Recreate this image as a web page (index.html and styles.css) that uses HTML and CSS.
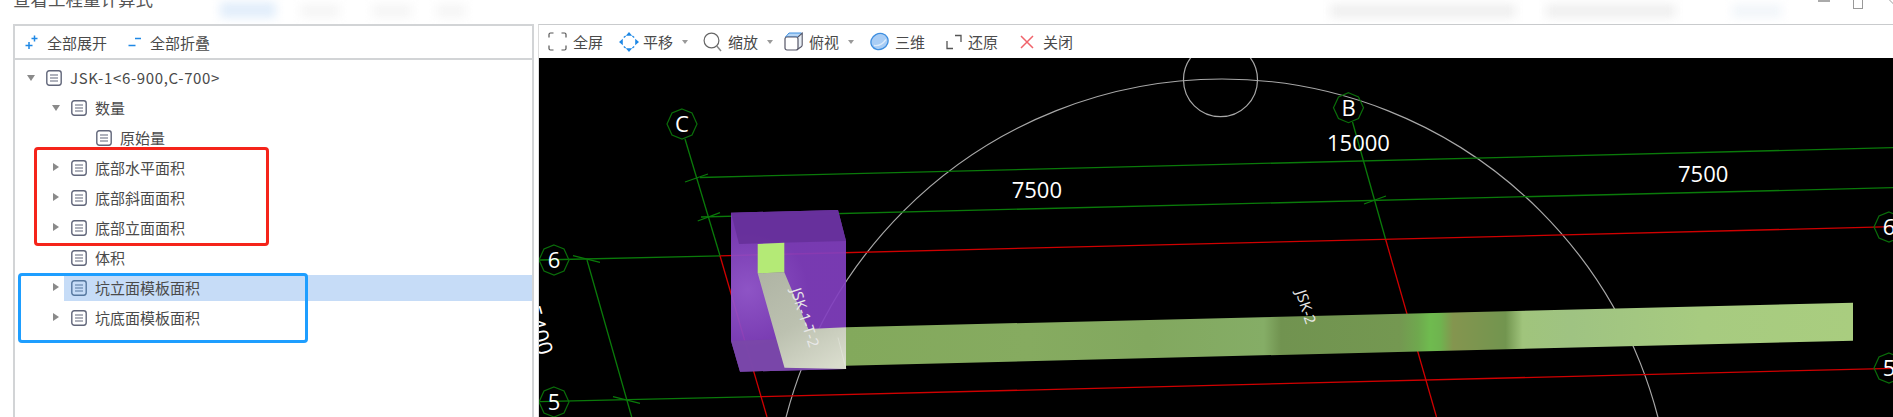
FILE: index.html
```html
<!DOCTYPE html>
<html lang="zh-CN">
<head>
  <meta charset="UTF-8">
  <title>查看工程量计算式</title>
  <link rel="stylesheet" href="styles.css">
</head>
<body>

  <svg class="defs" width="0" height="0">
    <symbol id="doc" viewBox="0 0 16 16">
      <rect x="0.8" y="0.8" width="14.4" height="14.4" rx="2.4" fill="none" stroke="currentColor" stroke-width="1.4"/>
      <path d="M4 5h8M4 8h8M4 11h8" stroke="currentColor" stroke-width="1.2"/>
    </symbol>
  </svg>

  <!-- title bar -->
  <div class="title-bar">
    <div class="title">查看工程量计算式</div>
    <span class="smudge smudge-blue"></span>
    <span class="smudge smudge-a"></span>
    <span class="smudge smudge-b"></span>
    <span class="smudge smudge-c"></span>
    <span class="smudge smudge-d"></span>
    <span class="smudge smudge-e"></span>
    <span class="smudge smudge-f"></span>
    <div class="win-btns">
      <span class="win-min"></span>
      <span class="win-max"></span>
      <span class="win-close"></span>
    </div>
  </div>

  <div class="main">
    <!-- left: tree -->
    <div class="tree-panel">
      <div class="tree-tools">
        <div class="tool">
          <svg class="tool-icon" width="13" height="14" viewBox="0 0 13 14"><path d="M4 7v7M0.500 10.500h7M9.500 0.500v6M6.500 3.500h6" stroke="#1e88e5" stroke-width="1.500" fill="none"/></svg>
          全部展开
        </div>
        <div class="tool">
          <svg class="tool-icon" width="13" height="14" viewBox="0 0 13 14"><path d="M0.500 10.500h7M7 3.500h6" stroke="#1e88e5" stroke-width="1.500" fill="none"/></svg>
          全部折叠
        </div>
      </div>

      <div class="tree">
        <div class="row level-1 latin"><i class="tog open"></i><div class="row-body"><svg class="doc"><use href="#doc"/></svg>JSK-1&lt;6-900,C-700&gt;</div></div>
        <div class="row level-2"><i class="tog open"></i><div class="row-body"><svg class="doc"><use href="#doc"/></svg>数量</div></div>
        <div class="row level-3"><i class="tog"></i><div class="row-body"><svg class="doc"><use href="#doc"/></svg>原始量</div></div>
        <div class="row level-2"><i class="tog shut"></i><div class="row-body"><svg class="doc"><use href="#doc"/></svg>底部水平面积</div></div>
        <div class="row level-2"><i class="tog shut"></i><div class="row-body"><svg class="doc"><use href="#doc"/></svg>底部斜面面积</div></div>
        <div class="row level-2"><i class="tog shut"></i><div class="row-body"><svg class="doc"><use href="#doc"/></svg>底部立面面积</div></div>
        <div class="row level-2"><i class="tog"></i><div class="row-body"><svg class="doc"><use href="#doc"/></svg>体积</div></div>
        <div class="row level-2 selected"><i class="tog shut"></i><div class="row-body"><svg class="doc"><use href="#doc"/></svg>坑立面模板面积</div></div>
        <div class="row level-2"><i class="tog shut"></i><div class="row-body"><svg class="doc"><use href="#doc"/></svg>坑底面模板面积</div></div>
      </div>

      <!-- annotation boxes drawn over the tree -->
      <div class="mark mark-red"></div>
      <div class="mark mark-blue"></div>
    </div>

    <!-- right: 3d view -->
    <div class="view-panel">
      <div class="view-tools">
        <div class="vt vt-full">
          <svg width="19" height="19" viewBox="0 0 19 19"><path d="M5.500 1H2.500Q1 1 1 2.500V5.500M13.500 1H16.500Q18 1 18 2.500V5.500M1 13.500V16.500Q1 18 2.500 18H5.500M18 13.500V16.500Q18 18 16.500 18H13.500" fill="none" stroke="#555" stroke-width="1.200"/></svg>
          全屏
        </div>
        <div class="vt vt-pan">
          <svg width="20" height="20" viewBox="0 0 20 20"><g fill="#1e88e5"><path d="M10 0l3.200 3.800H6.800zM10 20l-3.200-3.800h6.400zM0 10l3.800-3.200v6.400zM20 10l-3.800 3.200V6.800z"/></g><path d="M4.800 5.400l1.800-1.400M15.200 5.400l-1.800-1.400M4.800 14.600l1.800 1.400M15.200 14.600l-1.800 1.400" stroke="#1e88e5" stroke-width="1.300"/></svg>
          平移<i class="caret"></i>
        </div>
        <div class="vt vt-zoom">
          <svg width="19" height="20" viewBox="0 0 19 20"><circle cx="8.500" cy="8.500" r="7.400" fill="none" stroke="#666" stroke-width="1.200"/><path d="M13.800 14l4.200 5" stroke="#888" stroke-width="1.500"/></svg>
          缩放<i class="caret"></i>
        </div>
        <div class="vt vt-top">
          <svg width="19" height="19" viewBox="0 0 19 19"><path d="M5 1h12q1.200 0 1.200 1.200L14 5H1.500z" fill="#b5d6f7" stroke="#3f8fe0" stroke-width="1"/><path d="M14 5l4.200-3.800V13q0 1-1 1.800L14 17" fill="#e8eef5" stroke="#556" stroke-width="1.100"/><rect x="1" y="5" width="13" height="13" rx="2" fill="#fff" stroke="#556" stroke-width="1.200"/></svg>
          俯视<i class="caret"></i>
        </div>
        <div class="vt vt-3d">
          <svg width="19" height="19" viewBox="0 0 19 19"><ellipse cx="9.500" cy="9.500" rx="8.800" ry="7.800" transform="rotate(-28 9.500 9.500)" fill="#a9cdf5" stroke="#3f8fe0" stroke-width="1.300"/><path d="M4 13.500Q11 14.500 16 7.500" fill="none" stroke="#dcebfb" stroke-width="1.300"/></svg>
          三维
        </div>
        <div class="vt vt-back">
          <svg width="16" height="16" viewBox="0 0 16 16"><path d="M1 7v7.500h6M9 1.500h6V8" fill="none" stroke="#555" stroke-width="1.300"/></svg>
          还原
        </div>
        <div class="vt vt-close">
          <svg width="14" height="14" viewBox="0 0 14 14"><path d="M1 1l12 12M13 1L1 13" stroke="#f0636b" stroke-width="1.500"/></svg>
          关闭
        </div>
      </div>

      <svg class="canvas" viewBox="539 58 1354 359" width="1354" height="359">
        <defs>
          <linearGradient id="bar" gradientUnits="userSpaceOnUse" x1="846" y1="0" x2="1853" y2="0">
            <stop offset="0" stop-color="#83a95c"/>
            <stop offset="0.18" stop-color="#86ab60"/>
            <stop offset="0.3" stop-color="#82a85f"/>
            <stop offset="0.415" stop-color="#85ad66"/>
            <stop offset="0.432" stop-color="#719350"/>
            <stop offset="0.55" stop-color="#749851"/>
            <stop offset="0.568" stop-color="#6fa84e"/>
            <stop offset="0.58" stop-color="#6fbb4f"/>
            <stop offset="0.59" stop-color="#6fb44f"/>
            <stop offset="0.603" stop-color="#84954f"/>
            <stop offset="0.655" stop-color="#72954f"/>
            <stop offset="0.672" stop-color="#a0c47c"/>
            <stop offset="0.72" stop-color="#9fc382"/>
            <stop offset="0.85" stop-color="#a7cb80"/>
            <stop offset="1" stop-color="#a9cd7f"/>
          </linearGradient>
          <linearGradient id="band" gradientUnits="userSpaceOnUse" x1="770" y1="273" x2="830" y2="370">
            <stop offset="0" stop-color="#b0b5a5"/>
            <stop offset="0.5" stop-color="#bcc1b0"/>
            <stop offset="1" stop-color="#d9dccd"/>
          </linearGradient>
          <radialGradient id="glow" gradientUnits="userSpaceOnUse" cx="748" cy="290" r="60">
            <stop offset="0" stop-color="#9a5bd6"/>
            <stop offset="1" stop-color="#823fc0"/>
          </radialGradient>
        </defs>

        <!-- big circle + small circle -->
        <circle cx="1222" cy="529" r="450" class="arc"/>
        <circle cx="1220.500" cy="79.700" r="37" class="arc"/>

        <!-- dimension lines -->
        <path class="gr" d="M700 177.500L1893 147.700"/>
        <path class="gr" d="M701 217L1893 187.700"/>
        <path class="gr" d="M685 182L708 174M697.700 221L720 212.700M1364 204L1386 196"/>
        <path class="gr" d="M587 260L631.700 417M573 255.700L600 262.300M613 396.700L640 403.300"/>

        <!-- axes -->
        <path class="gr" d="M540 260L720 255.800"/>
        <path class="rd" d="M720 255.800L1893 226.700"/>
        <path class="gr" d="M540 401.700L760 396.700"/>
        <path class="rd" d="M760 396.700L1893 368.300"/>
        <path class="gr" d="M685 139L720 255.800"/>
        <path class="rd" d="M720 255.800L767 417"/>
        <path class="gr" d="M1352.500 122L1385.600 239.300"/>
        <path class="rd" d="M1385.600 239.300L1436.500 417"/>

        <!-- pile cap, see-through so the axes show inside it -->
        <path d="M731 212.700L838 210L846 241V369L740 371.700L731 340.700Z" fill="url(#glow)" fill-opacity="0.92"/>
        <path d="M731 212.700L838 210L846 241L739 244Z" fill="#66309a" fill-opacity="0.92"/>
        <path d="M731 340.700L837.500 337.700L846 369L740 371.700Z" fill="#7a48a8" fill-opacity="0.92"/>
        <path d="M846 327.300L1853 302.700V340.700L846 365.700Z" fill="url(#bar)"/>
        <path d="M757.700 273.300L784.300 272.300L808.300 329L846 327.300V369L784.500 367.700Z" fill="url(#band)"/>
        <path d="M757.700 244L784.300 242.700V272.300L757.700 273.300Z" fill="#b4ea76"/>
        <path d="M838 337.500L846 369" stroke="#fff" stroke-opacity="0.25" fill="none"/>

        <!-- axis bubbles -->
        <polygon class="bubble" points="682,109 692,113 697,124 692,135 682,139 672,135 667,124 672,113"/>
        <polygon class="bubble" points="1348.500,92.700 1358.500,97 1363.500,107.700 1358.500,118.500 1348.500,122.700 1338.500,118.500 1333.500,107.700 1338.500,97"/>
        <polygon class="bubble" points="554,245 564,249 569,260 564,271 554,275 544,271 539,260 544,249"/>
        <polygon class="bubble" points="554,387 564,391 569,402 564,413 554,417 544,413 539,402 544,391"/>
        <polygon class="bubble" points="1889,212 1899,216 1904,227 1899,238 1889,242 1879,238 1874,227 1879,216"/>
        <polygon class="bubble" points="1889,353 1899,357 1904,368 1899,379 1889,383 1879,379 1874,368 1879,357"/>

        <!-- labels -->
        <text class="lb" x="682" y="132" text-anchor="middle">C</text>
        <text class="lb" x="1348.500" y="116" text-anchor="middle">B</text>
        <text class="lb" x="554" y="268" text-anchor="middle">6</text>
        <text class="lb" x="554" y="410" text-anchor="middle">5</text>
        <text class="lb" x="1889" y="235" text-anchor="middle">6</text>
        <text class="lb" x="1889" y="376" text-anchor="middle">5</text>
        <text class="lb" x="1327" y="151">15000</text>
        <text class="lb" x="1011.700" y="198">7500</text>
        <text class="lb" x="1678" y="182">7500</text>
        <text class="lb" transform="translate(524.500 308) rotate(74)">5400</text>
        <text class="lb-sm" transform="translate(1295.500 292) rotate(72)">JSK-2</text>
        <text class="lb-sm" transform="translate(790.500 290) rotate(72)">JSK-1-T-2</text>
      </svg>
    </div>
  </div>

</body>
</html>
```

FILE: styles.css
```css
body {
  margin: 0;
  background-color: #fff;
  font-family: "Noto Sans CJK SC", "Noto Sans", sans-serif;
  font-size: 15px;
  color: #4a4a4a;
  height: 417px;
  overflow: hidden;
}

.defs {
  position: absolute;
}

/* title bar */
.title-bar {
  position: relative;
  height: 24px;
  overflow: hidden;
}

.title {
  position: absolute;
  left: 13px;
  top: -13px;
  font-size: 17.5px;
  line-height: 24px;
  color: #555;
}

.smudge {
  position: absolute;
  top: 4px;
  height: 14px;
  background-color: #f0f0f0;
  filter: blur(5px);
}

.smudge-blue { left: 220px; width: 56px; top: 2px; height: 16px; background-color: #e2eefb; }
.smudge-a { left: 300px; width: 40px; background-color: #f6f6f6; }
.smudge-b { left: 372px; width: 40px; background-color: #f6f6f6; }
.smudge-c { left: 436px; width: 30px; background-color: #f6f6f6; }
.smudge-d { left: 1330px; width: 186px; }
.smudge-e { left: 1546px; width: 130px; }
.smudge-f { left: 1732px; width: 50px; background-color: #f2f6fa; }

.win-btns span {
  position: absolute;
  top: 0;
}

.win-min { left: 1818px; width: 12px; height: 2px; background-color: #aaa; }
.win-max { left: 1853px; width: 8px; height: 8px; border: 1px solid #999; border-top: none; }
.win-close { left: 1885px; width: 8px; height: 8px; border-right: 1px solid #999; transform: skewX(45deg); }

.main {
  display: flex;
  height: 393px;
  padding-left: 13px;
}

/* tree panel */
.tree-panel {
  position: relative;
  width: 517px;
  border: 2px solid #d2d4d6;
  border-bottom: none;
  margin-right: 4px;
  flex-shrink: 0;
}

.tree-tools {
  display: flex;
  align-items: center;
  height: 32px;
  padding-left: 10px;
  gap: 21px;
  border-bottom: 2px solid #d2d4d6;
}

.tool {
  display: flex;
  align-items: center;
}

.tool-icon {
  margin-right: 9px;
}

.tree {
  padding-top: 3px;
}

.row {
  display: flex;
  align-items: stretch;
  height: 26px;
  padding: 2px 0;
  line-height: 26px;
  white-space: nowrap;
}

.level-1 { padding-left: 9px; }
.level-2 { padding-left: 34px; }
.level-3 { padding-left: 59px; }

.latin .row-body {
  letter-spacing: 0.65px;
}

.tog {
  position: relative;
  display: block;
  width: 15px;
  flex-shrink: 0;
}

.tog.open::before {
  content: "";
  position: absolute;
  left: 3px;
  top: 10px;
  border-top: 6px solid #8a8a8a;
  border-left: 4.5px solid transparent;
  border-right: 4.5px solid transparent;
}

.tog.shut::before {
  content: "";
  position: absolute;
  left: 4px;
  top: 8px;
  border-left: 6px solid #8a8a8a;
  border-top: 4.5px solid transparent;
  border-bottom: 4.5px solid transparent;
}

.row-body {
  flex: 1;
  display: flex;
  align-items: center;
  padding-left: 7px;
}

.doc {
  width: 16px;
  height: 16px;
  margin-right: 8px;
  color: #61667a;
  flex-shrink: 0;
}

.selected .row-body {
  background-color: #c6dcf7;
}

.selected .doc {
  color: #55779f;
}

/* marks over the tree, relative to the panel */
.mark {
  position: absolute;
  box-sizing: border-box;
  border-radius: 4px;
  border-width: 3px;
  border-style: solid;
}

.mark-red {
  left: 19px;
  top: 121px;
  width: 235px;
  height: 99px;
  border-color: #f5241a;
}

.mark-blue {
  left: 3px;
  top: 247px;
  width: 290px;
  height: 70px;
  border-color: #1e9eff;
}

/* 3d view */
.view-panel {
  flex: 1;
  min-width: 0;
  display: flex;
  flex-direction: column;
  border-top: 1px solid #c9cbcd;
  border-left: 1px solid #dcdcdc;
}

.view-tools {
  display: flex;
  align-items: center;
  height: 33px;
  flex-shrink: 0;
}

.vt {
  display: flex;
  align-items: center;
}

.vt svg {
  margin-right: 6px;
  flex-shrink: 0;
}

.vt-full { margin-left: 9px; }
.vt-pan { margin-left: 16px; }
.vt-zoom { margin-left: 15px; }
.vt-top { margin-left: 11px; }
.vt-3d { margin-left: 16px; }
.vt-back { margin-left: 21px; }
.vt-close { margin-left: 22px; }

.vt-pan svg {
  margin-right: 4px;
}

.vt-close svg {
  margin-right: 9px;
}

.caret {
  width: 0;
  height: 0;
  margin-left: 9px;
  border-top: 4px solid #999;
  border-left: 3px solid transparent;
  border-right: 3px solid transparent;
}

.canvas {
  display: block;
  background-color: #000;
  overflow: hidden;
  flex-shrink: 0;
}

.arc {
  fill: none;
  stroke: #a8a8a8;
  stroke-width: 1.2;
}

.gr {
  fill: none;
  stroke: #0a7a0a;
  stroke-width: 1.3;
}

.rd {
  fill: none;
  stroke: #d00000;
  stroke-width: 1.3;
}

.bubble {
  fill: none;
  stroke: #0a6e0a;
  stroke-width: 1.2;
}

.lb {
  fill: #fff;
  font-family: "Open Sans", sans-serif;
  font-size: 22px;
}

.lb-sm {
  fill: #e8e8e8;
  font-family: "Open Sans", sans-serif;
  font-size: 15px;
}
```
